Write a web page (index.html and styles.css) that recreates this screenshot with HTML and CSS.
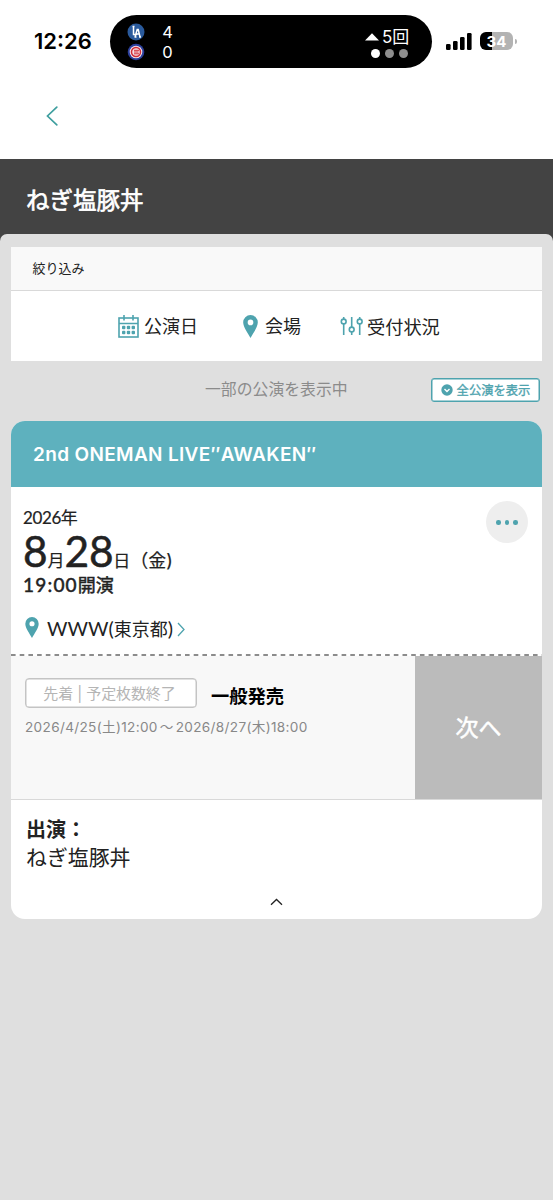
FILE: index.html
```html
<!DOCTYPE html>
<html lang="ja">
<head>
<meta charset="utf-8">
<title>ねぎ塩豚丼</title>
<link rel="stylesheet" href="styles.css">
</head>
<body>
<svg class="defs" width="0" height="0">
  <symbol id="pin" viewBox="0 0 14 22"><path fill-rule="evenodd" d="M7 0a7 7 0 0 1 7 7c0 4.500-4.400 10-7 15C4.400 17 0 11.500 0 7a7 7 0 0 1 7-7zm0 4.400a2.700 2.700 0 1 0 0 5.400 2.700 2.700 0 0 0 0-5.400z"/></symbol>
</svg>
<div class="status">
  <div class="clock">12:26</div>
  <div class="island">
    <div class="teams">
      <svg width="18" height="18" viewBox="0 0 18 18"><circle cx="9" cy="9" r="8.500" fill="#2a5a9c"/><path d="M5.500 3.500h2M6.500 3.500v8h3.500M8 14l2.200-7.500h1L13 14M8.500 11h4M7.500 14h2M12 14h2" fill="none" stroke="#fff" stroke-width="1.500"/></svg>
      <svg width="18" height="18" viewBox="0 0 18 18"><circle cx="9" cy="9" r="8.300" fill="#2b3f9b"/><circle cx="9" cy="9" r="6.300" fill="#f4dfe6"/><circle cx="9" cy="9" r="4.500" fill="none" stroke="#d22b35" stroke-width="1.500"/><path d="M7 7.300h5M7 9h4.500M7 10.800h5" stroke="#d22b35" stroke-width="1"/></svg>
    </div>
    <div class="runs"><span>4</span><span>0</span></div>
    <div class="inning">
      <div class="inning-row"><svg width="14" height="8" viewBox="0 0 14 8"><path d="M7 .3 14 7.500H0z" fill="#fff"/></svg><span>5回</span></div>
      <div class="outs"><i class="on"></i><i></i><i></i></div>
    </div>
  </div>
  <svg class="signal" width="26" height="17" viewBox="0 0 26 17"><rect x="0" y="11" width="4.600" height="6" rx="1.300"/><rect x="7" y="8" width="4.600" height="9" rx="1.300"/><rect x="14" y="4" width="4.600" height="13" rx="1.300"/><rect x="21" y="0" width="4.600" height="17" rx="1.300"/></svg>
  <div class="battery"><span>34</span></div>
  <i class="cap"></i>
</div>
<div class="nav"><svg width="12" height="20" viewBox="0 0 12 20"><path d="M10.800 1.200 1.500 10l9.300 8.800" fill="none" stroke="#3f9f9f" stroke-width="1.700" stroke-linecap="round"/></svg></div>
<div class="title"><h1>ねぎ塩豚丼</h1></div>
<div class="backdrop"><main class="content">
  <section class="filter">
    <div class="filter-head">絞り込み</div>
    <div class="filter-items">
      <a class="f-date"><svg width="21" height="23" viewBox="0 0 21 23"><g fill="none" stroke="#4ea3ae" stroke-width="1.600"><rect x="1" y="3" width="19" height="19"/><path d="M1 8.500h19M6 0v5.500M15 0v5.500"/></g><g fill="#4ea3ae"><rect x="4" y="10.800" width="3.400" height="3.400" rx="1"/><rect x="8.800" y="10.800" width="3.400" height="3.400" rx="1"/><rect x="13.600" y="10.800" width="3.400" height="3.400" rx="1"/><rect x="4" y="15.800" width="3.400" height="3.400" rx="1"/><rect x="8.800" y="15.800" width="3.400" height="3.400" rx="1"/><rect x="13.600" y="15.800" width="3.400" height="3.400" rx="1"/></g></svg><span>公演日</span></a>
      <a class="f-venue"><svg class="pin" width="15" height="23"><use href="#pin"/></svg><span>会場</span></a>
      <a class="f-status"><svg width="24" height="18" viewBox="0 0 24 18"><g fill="none" stroke="#4ea3ae" stroke-width="1.600"><circle cx="3.700" cy="4.500" r="2.400"/><path d="M3.700 0v2M3.700 7v11"/><circle cx="11.700" cy="12.500" r="2.400"/><path d="M11.700 0v10M11.700 15v3"/><circle cx="19.700" cy="4.500" r="2.400"/><path d="M19.700 0v2M19.700 7v11"/></g></svg><span>受付状況</span></a>
    </div>
  </section>
  <div class="showing">
    <span class="showing-text">一部の公演を表示中</span>
    <a class="show-all"><svg width="12" height="12" viewBox="0 0 12 12"><circle cx="6" cy="6" r="5.700" fill="#4ea3ae"/><path d="m3.500 5 2.500 2.500L8.500 5" fill="none" stroke="#fff" stroke-width="1.400"/></svg><span>全公演を表示</span></a>
  </div>
  <article class="card">
    <h2>2nd ONEMAN LIVE″AWAKEN″</h2>
    <div class="info">
      <div class="when">
        <div class="year"><b>2026</b>年</div>
        <div class="day"><b>8</b>月<b>28</b>日<span class="dow">（金)</span></div>
        <div class="time"><b>19:00</b>開演</div>
        <a class="venue"><svg class="pin" width="14" height="21"><use href="#pin"/></svg><span><b>WWW(</b>東京都<b>)</b></span><svg class="chev" width="8" height="15" viewBox="0 0 8 15"><path d="m1 1 6 6.500L1 14" fill="none" stroke="#4ea3ae" stroke-width="1.300"/></svg></a>
      </div>
      <div class="more"><i></i><i></i><i></i></div>
    </div>
    <svg class="dash" width="531" height="2"><path d="M0 1h531" stroke="#8c8c8c" stroke-width="2" stroke-dasharray="4.600 4.100"/></svg>
    <div class="ticket">
      <div class="sale">
        <div class="sale-top"><span class="badge">先着 | 予定枚数終了</span><strong>一般発売</strong></div>
        <div class="period">2026/4/25(土)12:00<span class="wave">～</span>2026/8/27(木)18:00</div>
      </div>
      <div class="next">次へ</div>
    </div>
    <div class="cast">
      <div class="cast-label">出演：</div>
      <div class="cast-name">ねぎ塩豚丼</div>
      <svg class="fold" width="13" height="8" viewBox="0 0 13 8"><path d="m1 6.800 5.500-5.300L12 6.800" fill="none" stroke="#222" stroke-width="1.300"/></svg>
    </div>
  </article>
</main></div>
</body>
</html>
```
FILE: styles.css
```css
* { box-sizing: border-box; }
body { margin: 0; width: 553px; height: 1200px; display: flex; flex-direction: column; overflow: hidden; background: #fff; color: #222; font-family: Inter, "Noto Sans CJK JP", sans-serif; }
svg { display: block; flex: none; }
.defs { position: absolute; }
span, a, h1, h2, strong { white-space: nowrap; }
.pin { fill: #4ea3ae; }
.status { height: 83px; padding: 15px 0 0 34px; display: flex; align-items: flex-start; flex: none; }
.clock { width: 76px; padding-top: 12px; font-size: 22px; line-height: 29px; font-weight: 600; color: #000; }
.island { width: 322px; height: 53px; border-radius: 27px; background: #000; color: #fff; display: flex; padding-left: 17px; }
.teams { padding-top: 8px; width: 31px; display: flex; flex-direction: column; gap: 2px; }
.runs { width: 19px; padding-top: 7px; display: flex; flex-direction: column; align-items: center; font-size: 16.500px; line-height: 20px; }
.inning { margin-left: 187px; width: 48px; padding-top: 12px; }
.inning-row { display: flex; align-items: center; gap: 3px; height: 19px; font-size: 17px; line-height: 20px; }
.inning-row svg { margin-left: 1px; }
.outs { display: flex; gap: 5px; justify-content: flex-end; padding: 3px 4px 0 0; }
.outs i { width: 9px; height: 9px; border-radius: 50%; background: #8e8e8e; }
.outs .on { background: #fff; }
.signal { margin: 18px 0 0 14px; }
.battery { margin: 17px 0 0 8px; width: 33px; height: 18px; border-radius: 6px; background: linear-gradient(90deg, #000 12px, #b3b3b3 12px); color: #fff; text-align: center; font-size: 15px; font-weight: 700; line-height: 19px; }
.cap { margin: 24px 0 0 2px; width: 2px; height: 5px; border-radius: 0 2px 2px 0; background: #b3b3b3; }
.nav { height: 76px; padding: 23px 0 0 46px; flex: none; }
.title { height: 75px; background: #434343; padding: 24px 26px; flex: none; }
h1 { margin: 0; color: #fff; font-size: 23.500px; line-height: 36px; font-weight: 400; -webkit-text-stroke: .6px #fff; }
.backdrop { flex: 1; background: linear-gradient(#434343 20px, #dfdfdf 20px); }
.content { height: 100%; background: #dfdfdf; border-radius: 7px 7px 0 0; padding: 13px 11px 0; }
.filter { height: 114px; background: #fff; }
.filter-head { height: 44px; background: #f9f9f9; border-bottom: 1px solid #d9d9d9; padding-left: 21.500px; font-size: 13px; line-height: 43px; }
.filter-items { height: 70px; padding-left: 107px; display: flex; align-items: center; font-size: 18px; line-height: 26px; }
.filter-items a { display: flex; align-items: center; }
.filter-items span { padding-top: 2px; }
.f-date { width: 125px; gap: 5px; }
.f-venue { width: 97px; gap: 7px; }
.f-status { gap: 3px; }
.f-status span { font-size: 18.200px; }
.showing { height: 60px; display: flex; padding: 17px 0 0 194px; }
.showing-text { width: 226px; font-size: 15.850px; line-height: 24px; color: #8b8b8b; }
.show-all { width: 109px; height: 24px; border: 1px solid #4ea3ae; box-shadow: inset 0 0 0 .5px #4ea3ae; border-radius: 3px; background: #fff; display: flex; align-items: center; justify-content: center; gap: 4px; font-size: 12.300px; font-weight: 400; line-height: 20px; color: #4ea3ae; -webkit-text-stroke: .35px #4ea3ae; }
.show-all span { padding-top: 1px; }
.card { height: 498px; background: #fff; border-radius: 14px; overflow: hidden; }
h2 { margin: 0; height: 66px; padding-left: 22px; background: #5eb1be; color: #fff; font-size: 19px; line-height: 67px; font-weight: 600; letter-spacing: .34px; }
.info { height: 167px; padding: 19px 14px 0 12px; display: flex; justify-content: space-between; }
.more { width: 42px; height: 42px; margin-top: -5px; border-radius: 50%; background: #eee; display: flex; align-items: center; justify-content: center; gap: 4px; padding-top: 1px; }
.more i { width: 4.500px; height: 4.500px; border-radius: 50%; background: #4ea3ae; }
.when b { font-family: Lato, sans-serif; font-weight: 400; }
.year { font-size: 17px; line-height: 24px; height: 24px; -webkit-text-stroke: .2px #222; }
.year b { letter-spacing: -.4px; }
.day { font-size: 17px; line-height: 42px; height: 43px; display: flex; align-items: baseline; -webkit-text-stroke: .2px #222; }
.day b { font-size: 42.500px; letter-spacing: -.2px; -webkit-text-stroke: .5px #222; }
.dow { font-size: 18px; }
.time { font-size: 18px; line-height: 24px; height: 43px; font-weight: 400; -webkit-text-stroke: .5px #222; }
.time b { font-size: 19px; letter-spacing: 1.200px; }
.venue { display: flex; align-items: center; font-size: 18px; line-height: 24px; }
.venue .pin { margin: -4px 8px 0 2px; }
.venue b { font-size: 19.800px; }
.chev { margin-left: 4px; }
.ticket { height: 144px; display: flex; border-bottom: 1px solid #d9d9d9; background: #f8f8f8; }
.sale { width: 404px; padding: 22px 0 0 14px; }
.sale-top { display: flex; align-items: center; height: 30px; gap: 14px; }
.badge { width: 172px; height: 30px; border: 1px solid #c4c4c4; box-shadow: inset 0 0 0 .5px #c4c4c4; border-radius: 4px; background: #fff; color: #b5b5b5; font-size: 15px; letter-spacing: -.1px; line-height: 29px; padding-right: 3px; text-align: center; }
.sale strong { padding-top: 5px; color: #000; font-size: 18.300px; line-height: 26px; font-weight: 700; }
.period { margin-top: 7px; font-size: 13.600px; letter-spacing: .33px; line-height: 24px; color: #888; white-space: nowrap; }
.wave { margin: 0 2px; }
.next { width: 127px; background: #bbb; color: #fff; font-size: 23px; font-weight: 400; line-height: 145px; text-align: center; -webkit-text-stroke: .5px #fff; }
.cast { padding: 16px 15px 0; font-size: 20px; line-height: 28px; }
.cast-label { font-weight: 700; }
.cast-name { font-size: 20.900px; }
.fold { margin: 26px auto 0; }
```
